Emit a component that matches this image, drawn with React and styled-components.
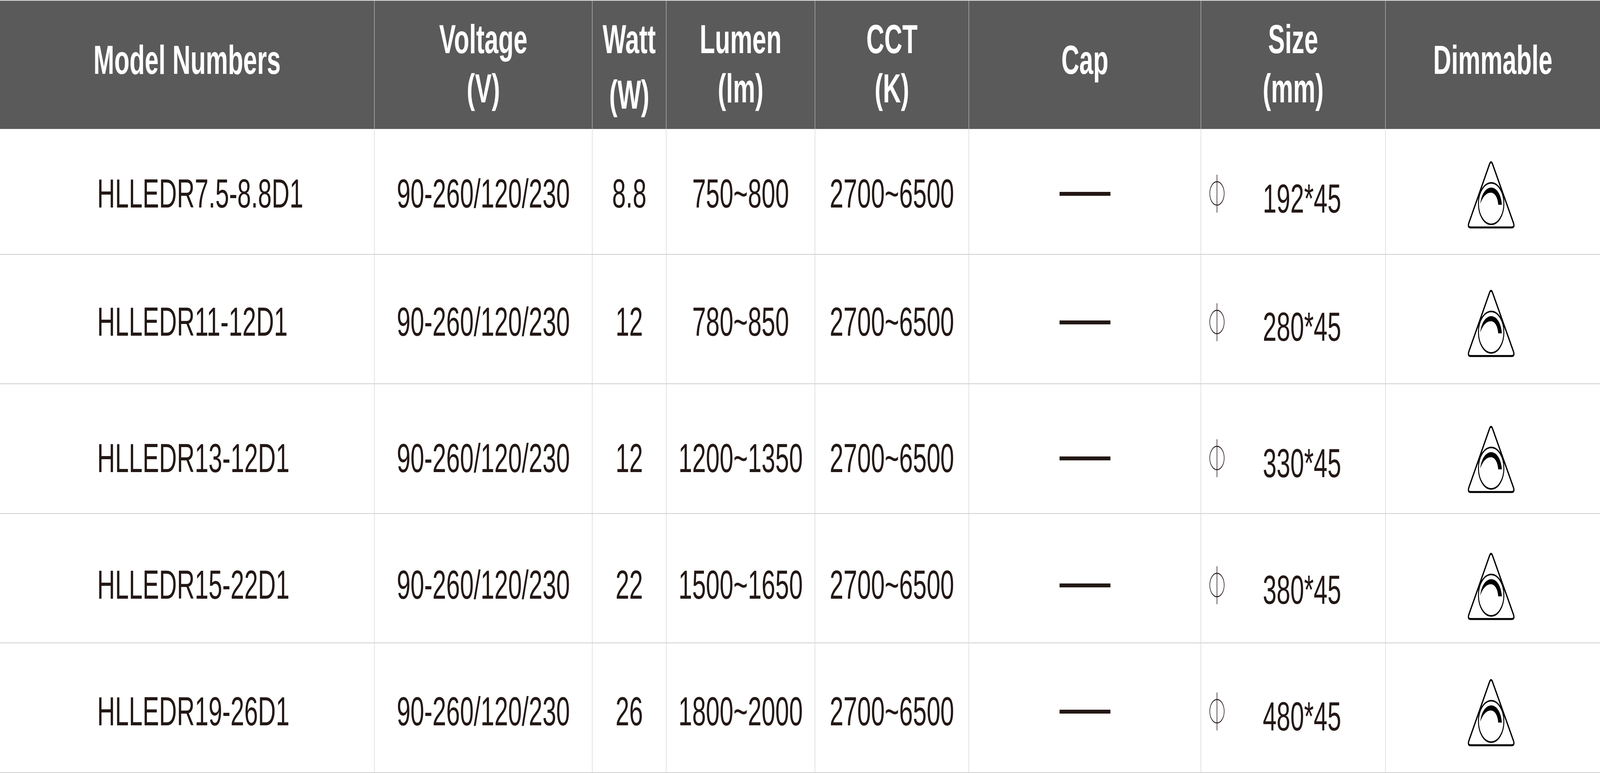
import React, { useEffect, useState } from 'react';
import styled, { createGlobalStyle } from 'styled-components';

const DESIGN_WIDTH = 6667;
const COLS = '1559px 908px 308px 620px 641px 967px 769px 895px';
const INK = '#231815';

const GlobalStyle = createGlobalStyle`
  html, body { margin: 0; padding: 0; background: #ffffff; overflow: hidden; }
  body { font-family: "Liberation Sans", Arial, Helvetica, sans-serif; }
  * { box-sizing: border-box; }
`;

const Viewport = styled.div`
  width: 100vw;
  height: 1978px;
  overflow: hidden;
  background: #ffffff;
`;

const Table = styled.div`
  width: ${DESIGN_WIDTH}px;
  border-top: 2px solid #d9d9d9;
  background: #ffffff;
  transform-origin: 0 0;
`;

const HeaderRow = styled.div`
  display: grid;
  grid-template-columns: ${COLS};
  height: 328px;
  background: #5b5a5b;
`;

const HeaderCell = styled.div`
  display: flex;
  flex-direction: column;
  align-items: center;
  padding-top: ${(p) => p.$top}px;
  border-left: 2px solid #bdbdbd;
  color: #ffffff;
  font-weight: 700;
  font-size: 104px;
  line-height: 126px;
  &:first-child { border-left: none; }
`;

const HeaderLine = styled.span`
  display: block;
  white-space: nowrap;
  margin-top: ${(p) => p.$drop || 0}px;
`;

const Row = styled.div`
  display: grid;
  grid-template-columns: ${COLS};
  height: ${(p) => p.$height}px;
  border-bottom: 2px solid #cfcfcf;
`;

const Cell = styled.div`
  display: flex;
  align-items: center;
  justify-content: ${(p) => p.$justify || 'center'};
  padding-top: ${(p) => p.$shift * 2}px;
  padding-left: ${(p) => p.$padLeft || 0}px;
  padding-right: ${(p) => p.$padRight || 0}px;
  border-left: 2px solid #d2d2d2;
  color: ${INK};
  font-size: 103px;
  line-height: 1.15;
  white-space: nowrap;
  &:first-child { border-left: none; }
`;

const Dash = styled.span`
  display: block;
  width: 212px;
  height: 10px;
  background: ${INK};
`;

const SizeValue = styled.span`
  display: block;
  margin-left: 159px;
  margin-top: 26px;
`;

const PhiIcon = () => (
  <svg width="64" height="100" viewBox="0 0 64 100" aria-hidden="true">
    <circle cx="32" cy="49" r="30" fill="none" stroke={INK} strokeWidth="2.4" />
    <line x1="32" y1="1" x2="32" y2="98" stroke={INK} strokeWidth="2.4" />
  </svg>
);

const DimmerIcon = () => (
  <svg width="210" height="186" viewBox="16 23 210 186" aria-hidden="true">
    <path
      d="M114 41.2 Q121 29 128 41.2 L214 189.8 Q221 202 207 202 L36 202 Q22 202 29 189.8 Z"
      fill="none"
      stroke="#000"
      strokeWidth="5"
      strokeLinejoin="round"
    />
    <circle cx="121.5" cy="141" r="53" fill="none" stroke="#000" strokeWidth="4" />
    <path
      d="M76 142 C80 118 98 100 122 100 C146 100 164 120 166 144 L151 144 C149 126 137 113 120 113 C102 113 86 124 76 142 Z"
      fill="#000"
    />
  </svg>
);

const headers = [
  { lines: ['Model Numbers'] },
  { lines: ['Voltage', '(V)'] },
  { lines: ['Watt', '(W)'], drop: 16 },
  { lines: ['Lumen', '(lm)'] },
  { lines: ['CCT', '(K)'] },
  { lines: ['Cap'] },
  { lines: ['Size', '(mm)'] },
  { lines: ['Dimmable'] },
];

const rows = [
  { model: 'HLLEDR7.5-8.8D1', watt: '8.8', lumen: '750~800', size: '192*45', height: 322, shift: 6 },
  { model: 'HLLEDR11-12D1', watt: '12', lumen: '780~850', size: '280*45', height: 331, shift: 8 },
  { model: 'HLLEDR13-12D1', watt: '12', lumen: '1200~1350', size: '330*45', height: 332, shift: 25 },
  { model: 'HLLEDR15-22D1', watt: '22', lumen: '1500~1650', size: '380*45', height: 331, shift: 18 },
  { model: 'HLLEDR19-26D1', watt: '26', lumen: '1800~2000', size: '480*45', height: 332, shift: 10 },
];

const fitScale = () =>
  typeof window === 'undefined' ? 1 : Math.min(1, window.innerWidth / DESIGN_WIDTH);

export default function App() {
  const [scale, setScale] = useState(fitScale);

  useEffect(() => {
    const onResize = () => setScale(fitScale());
    window.addEventListener('resize', onResize);
    return () => window.removeEventListener('resize', onResize);
  }, []);

  return (
    <>
      <GlobalStyle />
      <Viewport>
        <Table style={{ transform: `scaleX(${scale})` }}>
          <HeaderRow>
            {headers.map((h) => (
              <HeaderCell key={h.lines[0]} $top={h.lines.length > 1 ? 35 : 88}>
                {h.lines.map((line, i) => (
                  <HeaderLine key={line} $drop={i > 0 ? h.drop : 0}>
                    {line}
                  </HeaderLine>
                ))}
              </HeaderCell>
            ))}
          </HeaderRow>
          {rows.map((r) => (
            <Row key={r.model} $height={r.height}>
              <Cell $shift={r.shift} $justify="flex-start" $padLeft={405}>{r.model}</Cell>
              <Cell $shift={r.shift}>90-260/120/230</Cell>
              <Cell $shift={r.shift}>{r.watt}</Cell>
              <Cell $shift={r.shift}>{r.lumen}</Cell>
              <Cell $shift={r.shift}>2700~6500</Cell>
              <Cell $shift={r.shift}><Dash /></Cell>
              <Cell $shift={r.shift} $justify="flex-start" $padLeft={34}>
                <PhiIcon />
                <SizeValue>{r.size}</SizeValue>
              </Cell>
              <Cell $shift={r.shift} $padRight={16}><DimmerIcon /></Cell>
            </Row>
          ))}
        </Table>
      </Viewport>
    </>
  );
}
